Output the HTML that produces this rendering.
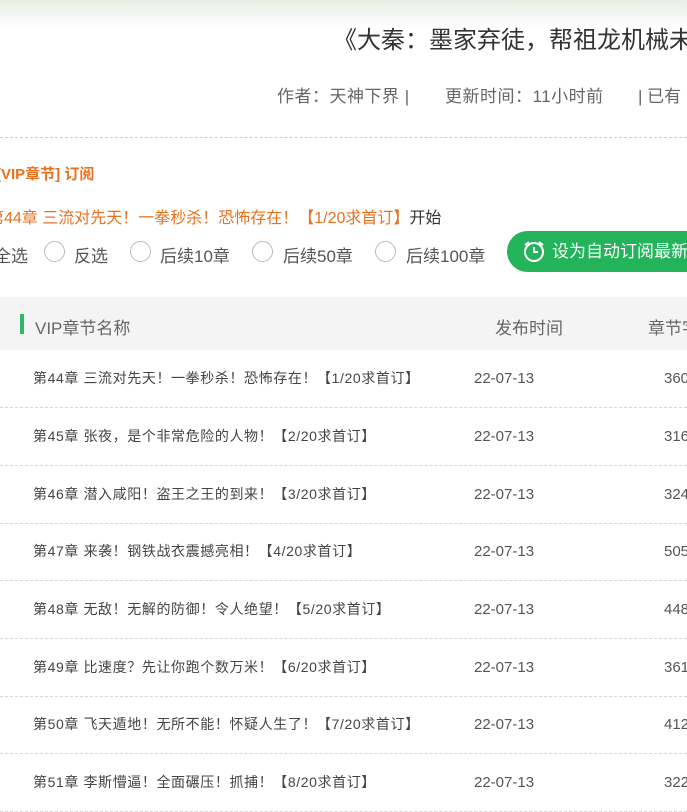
<html><head><style>
body{margin:0;width:687px;height:804px;overflow:hidden;background:#fff;font-family:"Liberation Sans","Noto Sans CJK SC",sans-serif;position:relative;color:#555}
.a{position:absolute;white-space:nowrap}
.r{position:absolute;width:19px;height:19px;border:1px solid #bbb;border-radius:50%;top:241px}
.row{position:absolute;left:0;width:687px;height:57px;border-bottom:1px dashed #d6d6d6;font-size:14px;color:#444}
.row span{position:absolute;top:0;line-height:57px}
.row span:first-child{letter-spacing:0.6px}
.row span:nth-child(2),.row span:nth-child(3){font-size:15px;color:#555}
</style></head><body>
<div class="a" style="left:0;top:0;width:687px;height:28px;background:linear-gradient(#e6efe3,#fff)"></div>
<div class="a" style="left:333px;top:20px;font-size:24px;color:#333">《大秦：墨家弃徒，帮祖龙机械未来</div>
<div class="a" style="left:277px;top:82px;font-size:17px;color:#666;letter-spacing:0.5px">作者：天神下界 |</div>
<div class="a" style="left:445px;top:82px;font-size:17px;color:#666;letter-spacing:0.5px">更新时间：11小时前</div>
<div class="a" style="left:638px;top:82px;font-size:17px;color:#666">| 已有</div>
<div class="a" style="left:0;top:137px;width:687px;border-top:1px dashed #ccc"></div>
<div class="a" style="left:-4px;top:163px;font-size:15px;font-weight:bold;color:#e8711f">[VIP章节] 订阅</div>
<div class="a" style="left:-12px;top:204px;font-size:16px;color:#e8711f">第44章 三流对先天！一拳秒杀！恐怖存在！【1/20求首订】<span style="color:#333">开始</span></div>
<div class="a" style="left:-6px;top:242px;font-size:17px;color:#555">全选</div>
<div class="r" style="left:44px"></div><div class="a" style="left:74px;top:242px;font-size:17px">反选</div>
<div class="r" style="left:130px"></div><div class="a" style="left:160px;top:242px;font-size:17px">后续10章</div>
<div class="r" style="left:252px"></div><div class="a" style="left:283px;top:242px;font-size:17px">后续50章</div>
<div class="r" style="left:375px"></div><div class="a" style="left:406px;top:242px;font-size:17px">后续100章</div>
<div class="a" style="left:507px;top:231px;width:200px;height:41px;border-radius:21px;background:#23b35a;color:#fff;font-size:17px;line-height:41px"><svg width="26" height="26" viewBox="0 0 26 26" style="vertical-align:middle;margin:0 5px 3px 14px"><circle cx="13" cy="14" r="9" fill="none" stroke="#fff" stroke-width="2"/><path d="M13 9v5h4M4 7l4-3M22 7l-4-3" fill="none" stroke="#fff" stroke-width="2"/></svg>设为自动订阅最新章</div>
<div class="a" style="left:0;top:297px;width:687px;height:53px;background:#f4f4f4"></div>
<div class="a" style="left:20px;top:314px;width:4px;height:20px;background:#2eb866"></div>
<div class="a" style="left:35px;top:314px;font-size:17px;color:#666">VIP章节名称</div>
<div class="a" style="left:495px;top:314px;font-size:17px;color:#666">发布时间</div>
<div class="a" style="left:648px;top:314px;font-size:17px;color:#666">章节字</div>
<div class="row" style="top:350px"><span style="left:33px">第44章 三流对先天！一拳秒杀！恐怖存在！【1/20求首订】</span><span style="left:474px">22-07-13</span><span style="left:664px">3600</span></div>
<div class="row" style="top:408px"><span style="left:33px">第45章 张夜，是个非常危险的人物！【2/20求首订】</span><span style="left:474px">22-07-13</span><span style="left:664px">3160</span></div>
<div class="row" style="top:466px"><span style="left:33px">第46章 潜入咸阳！盗王之王的到来！【3/20求首订】</span><span style="left:474px">22-07-13</span><span style="left:664px">3240</span></div>
<div class="row" style="top:523px"><span style="left:33px">第47章 来袭！钢铁战衣震撼亮相！【4/20求首订】</span><span style="left:474px">22-07-13</span><span style="left:664px">5050</span></div>
<div class="row" style="top:581px"><span style="left:33px">第48章 无敌！无解的防御！令人绝望！【5/20求首订】</span><span style="left:474px">22-07-13</span><span style="left:664px">4480</span></div>
<div class="row" style="top:639px"><span style="left:33px">第49章 比速度？先让你跑个数万米！【6/20求首订】</span><span style="left:474px">22-07-13</span><span style="left:664px">3610</span></div>
<div class="row" style="top:696px"><span style="left:33px">第50章 飞天遁地！无所不能！怀疑人生了！【7/20求首订】</span><span style="left:474px">22-07-13</span><span style="left:664px">4120</span></div>
<div class="row" style="top:754px"><span style="left:33px">第51章 李斯懵逼！全面碾压！抓捕！【8/20求首订】</span><span style="left:474px">22-07-13</span><span style="left:664px">3220</span></div>
</body></html>
